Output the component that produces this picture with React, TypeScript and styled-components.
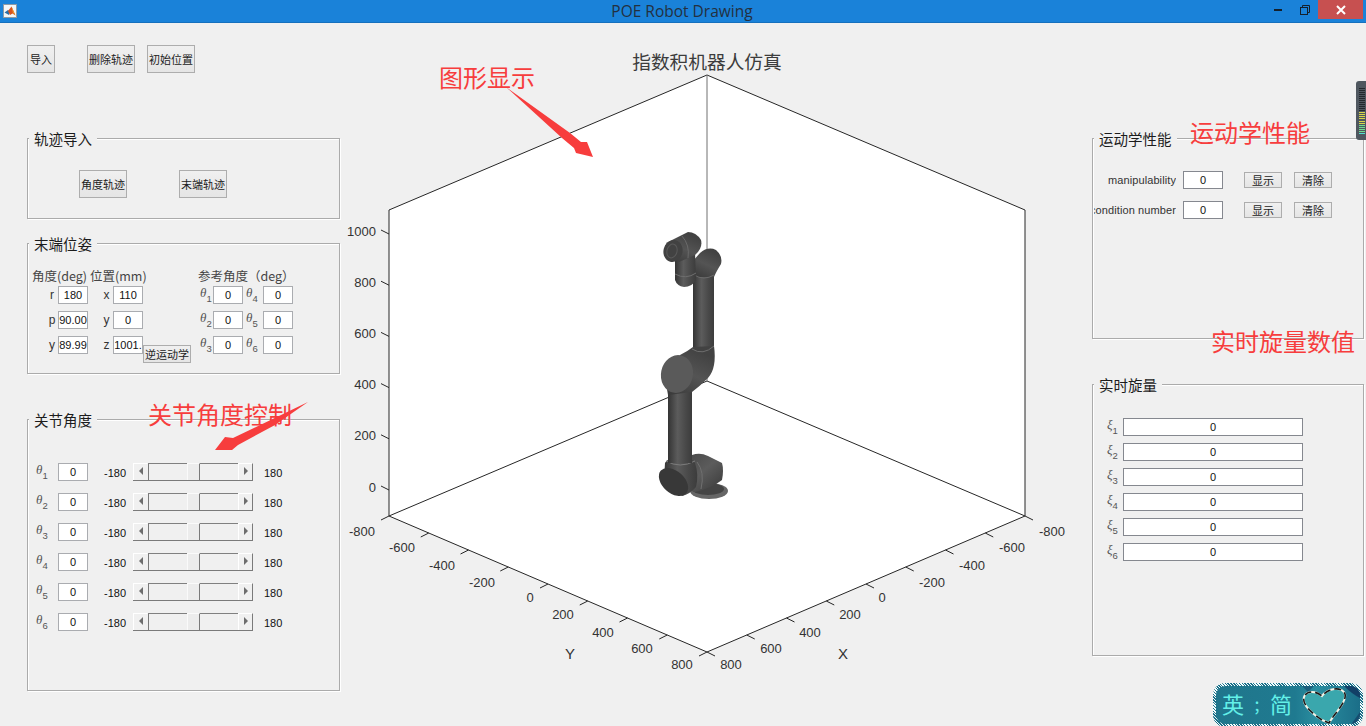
import React from "react";
import styled, { createGlobalStyle } from "styled-components";

const SANS = `"Liberation Sans", Arial, sans-serif`;
const CJK = `"Noto Sans CJK SC", "Liberation Sans", sans-serif`;

const Global = createGlobalStyle`
  html, body { margin: 0; padding: 0; background: #f0f0f0; overflow: hidden; }
  * { box-sizing: border-box; }
`;

const Root = styled.div`
  position: relative;
  width: 1366px;
  height: 726px;
  background: #f0f0f0;
  display: flex;
  flex-direction: column;
  overflow: hidden;
  font-family: ${SANS};
`;

const TitleBar = styled.header`
  height: 23px;
  flex: none;
  background: #1a82d9;
  border-bottom: 1px solid #1670bd;
  display: grid;
  grid-template-columns: 1fr auto 1fr;
  align-items: start;
`;
const TitleIconCell = styled.div`
  padding: 4px 0 0 3px;
  height: 22px;
`;
const WindowTitle = styled.div`
  font: 15.5px/23px "Open Sans", ${SANS};
  color: #23303f;
  white-space: nowrap;
  margin-left: -2px;
`;
const Controls = styled.div`
  display: flex;
  justify-content: flex-end;
  padding-right: 3px;
`;
const ControlBtn = styled.div<{ $w: number; $close?: boolean }>`
  width: ${(p) => p.$w}px;
  height: 19px;
  display: flex;
  align-items: center;
  justify-content: center;
  background: ${(p) => (p.$close ? "#c75050" : "transparent")};
`;

const Main = styled.main`
  flex: 1;
  display: grid;
  grid-template-columns: 340px 752px 274px;
  min-height: 0;
`;

const LeftColumn = styled.section`
  padding: 22px 0 0 27px;
  display: flex;
  flex-direction: column;
`;
const RightColumn = styled.section`
  padding: 115px 2px 0 0;
  display: flex;
  flex-direction: column;
  gap: 45px;
`;
const CenterColumn = styled.section`
  min-width: 0;
`;

const TopButtons = styled.div`
  display: flex;
  height: 28px;
  margin-bottom: 65px;
`;

const PushButton = styled.div<{ $w?: number; $h?: number; $ml?: number }>`
  width: ${(p) => p.$w ?? 48}px;
  height: ${(p) => p.$h ?? 28}px;
  margin-left: ${(p) => p.$ml ?? 0}px;
  flex: none;
  border: 1px solid #adadad;
  background: linear-gradient(#f0f0f0, #e5e5e5);
  color: #222;
  font: 11px/1 ${CJK};
  display: flex;
  align-items: center;
  justify-content: center;
  white-space: nowrap;
  overflow: hidden;
`;

const Panel = styled.div<{ $h: number; $mb?: number }>`
  position: relative;
  height: ${(p) => p.$h}px;
  margin-bottom: ${(p) => p.$mb ?? 0}px;
  flex: none;
  border: 1px solid #ababab;
  box-shadow: inset 1px 1px 0 #fff, 1px 1px 0 #fff;
`;
const Legend = styled.div`
  position: absolute;
  top: -8px;
  left: 1px;
  height: 16px;
  padding: 0 5px;
  background: #f0f0f0;
  color: #1c1c1c;
  font: 14.5px/16px ${CJK};
  white-space: nowrap;
`;

const TrackImport = styled.div`
  display: flex;
  padding: 31px 0 0 51px;
  gap: 52px;
`;

const PoseBody = styled.div`
  padding: 23px 0 0 4px;
`;
const PoseHeader = styled.div`
  height: 19px;
  display: flex;
  align-items: flex-start;
  color: #444;
  font: 12.5px/18px ${CJK};
  white-space: nowrap;
`;
const HeadCell = styled.span<{ $w: number }>`
  width: ${(p) => p.$w}px;
  flex: none;
`;
const PoseGrid = styled.div`
  display: grid;
  grid-template-columns: 26px 30px 25px 30px 1px 56px 13px 30px 20px 30px;
  grid-auto-rows: 18px;
  row-gap: 7px;
`;
const AxisLabel = styled.span`
  color: #333;
  font-size: 12px;
  line-height: 18px;
  text-align: center;
  padding-left: 14px;
`;
const AxisLabelX = styled(AxisLabel)`
  padding-left: 12px;
`;
const ValueBox = styled.div<{ $w?: number; $dark?: boolean }>`
  width: ${(p) => (p.$w ? `${p.$w}px` : "100%")};
  height: 18px;
  flex: none;
  background: #fff;
  border: 1px solid ${(p) => (p.$dark ? "#85888f" : "#aaacb0")};
  color: #111;
  font-size: 11px;
  line-height: 16px;
  text-align: center;
  white-space: nowrap;
  overflow: hidden;
`;
const IKButton = styled(PushButton)`
  margin-top: 9px;
  margin-bottom: -9px;
  height: 18px;
  width: 48px;
  position: relative;
`;
const Greek = styled.span<{ $pl?: number }>`
  display: flex;
  align-items: flex-start;
  padding-left: ${(p) => p.$pl ?? 0}px;
  color: #555;
  height: 18px;
`;
const GreekMain = styled.i`
  font: italic 13px/13px "Liberation Serif", "DejaVu Serif", serif;
`;
const GreekSub = styled.span`
  font: 9.5px/10px ${SANS};
  margin: 8px 0 0 0;
`;

const SliderList = styled.div`
  padding: 43px 0 0 8px;
  display: flex;
  flex-direction: column;
  gap: 12px;
`;
const SliderRow = styled.div`
  display: flex;
  align-items: center;
  height: 18px;
`;
const LabelCell = styled.div`
  width: 22px;
  flex: none;
  height: 18px;
`;
const RangeText = styled.span<{ $w: number; $ml: number }>`
  width: ${(p) => p.$w}px;
  margin-left: ${(p) => p.$ml}px;
  flex: none;
  color: #111;
  font-size: 11px;
  line-height: 18px;
  padding-top: 1px;
`;
const Slider = styled.div`
  width: 120px;
  height: 18px;
  flex: none;
  display: flex;
  border-bottom: 1px solid #7a7a7a;
`;
const SliderArrow = styled.div<{ $right?: boolean }>`
  width: 15px;
  flex: none;
  display: flex;
  align-items: center;
  justify-content: center;
  padding-bottom: 2px;
  background: #f0f0f0;
  border-top: 1px solid #fff;
  border-left: 1px solid #fff;
  border-right: 1px solid ${(p) => (p.$right ? "#7a7a7a" : "transparent")};
  &::before {
    content: "";
    border-style: solid;
    border-width: 4px 0 4px 4px;
    border-color: transparent transparent transparent #6d6d6d;
    transform: ${(p) => (p.$right ? "none" : "scaleX(-1)")};
  }
`;
const SliderTrack = styled.div`
  flex: 1;
  display: flex;
  justify-content: center;
  border-top: 1px solid #808080;
  border-left: 1px solid #7a7a7a;
`;
const SliderThumb = styled.div`
  width: 13px;
  margin-top: -1px;
  margin-left: -1px;
  background: #ececec;
  border-top: 1px solid #fafafa;
  border-left: 1px solid #fafafa;
  border-right: 1px solid #7a7a7a;
`;

const KinematicsBody = styled.div`
  padding: 32px 0 0 1px;
  display: flex;
  flex-direction: column;
  gap: 12px;
`;
const KinRow = styled.div`
  display: flex;
  align-items: center;
  height: 18px;
`;
const KinLabel = styled.div`
  width: 82px;
  flex: none;
  display: flex;
  justify-content: flex-end;
  overflow: hidden;
  color: #333;
  font-size: 11px;
  letter-spacing: 0.1px;
  line-height: 18px;
  white-space: nowrap;
  margin-right: 7px;
`;

const TwistList = styled.div`
  padding: 33px 0 0 14px;
  display: flex;
  flex-direction: column;
  gap: 7px;
`;
const TwistRow = styled.div`
  display: flex;
  height: 18px;
`;
const TwistLabel = styled.div`
  width: 16px;
  flex: none;
`;

const PlotSvg = styled.svg`
  display: block;
  width: 752px;
  height: 703px;
`;
const PlotTitle = styled.text`
  font: 18.7px ${CJK};
  fill: #3c3c3c;
  text-anchor: middle;
  dominant-baseline: central;
`;
const TickText = styled.text<{ $anchor?: string }>`
  font: 13px ${SANS};
  fill: #333;
  text-anchor: ${(p) => p.$anchor ?? "middle"};
  dominant-baseline: central;
`;
const AxisName = styled.text`
  font: 15px ${SANS};
  fill: #333;
  text-anchor: middle;
  dominant-baseline: central;
`;

const Annotation = styled.span<{ $x: number; $y: number }>`
  position: absolute;
  left: ${(p) => p.$x}px;
  top: ${(p) => p.$y}px;
  color: #f73d3d;
  font: 24px/30px ${CJK};
  white-space: nowrap;
`;
const ArrowLayer = styled.svg`
  position: absolute;
  inset: 0;
  width: 1366px;
  height: 726px;
  pointer-events: none;
`;

const MeterWidget = styled.div`
  position: absolute;
  right: 0;
  top: 81px;
  width: 10px;
  height: 59px;
  padding: 7px 1px 6px 3px;
  background: #4f575f;
  border-radius: 3px 0 0 3px;
  display: flex;
  flex-direction: column;
  justify-content: space-between;
`;
const MeterBar = styled.div<{ $c: string }>`
  height: 1px;
  flex: none;
  background: ${(p) => p.$c};
`;

const ImeBadge = styled.div`
  position: absolute;
  left: 1213px;
  top: 683px;
  width: 150px;
  height: 44px;
  padding: 3px;
  border-radius: 12px;
  background: repeating-linear-gradient(45deg, #f4ffff 0 1px, #1c6f88 1px 2px);
`;
const ImeInner = styled.div`
  position: relative;
  width: 100%;
  height: 100%;
  border-radius: 9px;
  background: linear-gradient(90deg, #20768c, #1f7a90 55%, #2a8ea0 70%, #1b6e88);
  display: flex;
  align-items: flex-start;
  padding: 1px 0 0 6px;
  color: #63f0e8;
  font: 22px/32px ${CJK};
  overflow: hidden;
`;
const ImeDot = styled.span`
  width: 26px;
  text-align: center;
  flex: none;
  font-size: 18px;
`;
const ImeHeart = styled.svg`
  position: absolute;
  right: 0;
  top: 0;
  width: 62px;
  height: 40px;
`;

const Theta = ({ n, pl, sym = "θ" }: { n: number; pl?: number; sym?: string }) => (
  <Greek $pl={pl}>
    <GreekMain>{sym}</GreekMain>
    <GreekSub>{n}</GreekSub>
  </Greek>
);

const RangeSlider = () => (
  <Slider>
    <SliderArrow />
    <SliderTrack>
      <SliderThumb />
    </SliderTrack>
    <SliderArrow $right />
  </Slider>
);

const yLabels: [string, number, number][] = [
  ["-800", 362, 531], ["-600", 402, 547], ["-400", 442, 565], ["-200", 482, 582], ["0", 530, 597],
  ["200", 563, 614], ["400", 603, 632], ["600", 642, 648], ["800", 682, 664],
];
const xLabels: [string, number, number][] = [
  ["-800", 1052, 531], ["-600", 1012, 547], ["-400", 972, 565], ["-200", 932, 582], ["0", 882, 597],
  ["200", 850, 614], ["400", 810, 632], ["600", 771, 648], ["800", 731, 664],
];
const zLabels = ["1000", "800", "600", "400", "200", "0"];

const Robot = () => (
  <g>
    <defs>
      <linearGradient id="armV" x1="0" x2="1" y1="0" y2="0">
        <stop offset="0" stopColor="#343434" />
        <stop offset="0.4" stopColor="#5c5c5c" />
        <stop offset="0.75" stopColor="#484848" />
        <stop offset="1" stopColor="#3c3c3c" />
      </linearGradient>
      <linearGradient id="armD" x1="0" x2="0.5" y1="1" y2="0">
        <stop offset="0" stopColor="#383838" />
        <stop offset="0.55" stopColor="#545454" />
        <stop offset="1" stopColor="#424242" />
      </linearGradient>
      <linearGradient id="baseBody" x1="0" x2="1" y1="0" y2="1">
        <stop offset="0" stopColor="#444" />
        <stop offset="0.5" stopColor="#5c5c5c" />
        <stop offset="1" stopColor="#383838" />
      </linearGradient>
    </defs>
    {/* flange and rear housing */}
    <ellipse cx="709" cy="491" rx="19" ry="8" fill="#666" />
    <ellipse cx="708" cy="489" rx="16" ry="6" fill="#444" />
    <path d="M692 455 Q700 452 708 456 L722 463 Q724 470 722 480 Q712 488 695 492 L682 488 L680 465 Z" fill="url(#baseBody)" />
    <path d="M697 462 Q705 472 701 489" stroke="#707070" strokeWidth="1" fill="none" />
    {/* lower shoulder */}
    <path d="M665 463 Q668 457 680 458 Q692 457 695 463 Q699 475 696 487 Q690 494 682 496 L664 480 Z" fill="url(#armV)" />
    <path d="M666 461 Q680 469 695 461" stroke="#7c7c7c" strokeWidth="1" fill="none" />
    <ellipse cx="673.5" cy="482" rx="17" ry="11" transform="rotate(42 673.5 482)" fill="#383838" />
    {/* lower arm */}
    <rect x="668" y="392" width="24" height="71" fill="url(#armV)" />
    {/* upper arm */}
    <rect x="693" y="274" width="21" height="76" fill="url(#armV)" />
    <path d="M680 355 Q688 351 693 347 L714 346 Q717 368 708 378 Q700 386 692 392 L668 395 L664 372 Z" fill="url(#armD)" />
    <path d="M692 349 Q703 356 714 346" stroke="#6e6e6e" strokeWidth="1" fill="none" />
    <ellipse cx="677" cy="374" rx="16" ry="19" transform="rotate(12 677 374)" fill="#5a5a5a" />
    {/* upper shoulder */}
    <path d="M700 253 Q708 246 716 250 Q723 256 721 264 Q716 272 714 277 L693 277 L692 262 Z" fill="url(#armD)" />
    <path d="M694 275 Q704 281 714 275" stroke="#6a6a6a" strokeWidth="1" fill="none" />
    {/* wrist */}
    <path d="M675 258 L695 252 L696 280 Q692 287 684 287 Q677 286 675 280 Z" fill="url(#armV)" />
    <path d="M675 274 Q686 280 696 273" stroke="#6e6e6e" strokeWidth="1" fill="none" />
    <path d="M666 243 L688 232 Q696 232 701 240 Q703 248 695 255 L679 262 Z" fill="url(#armD)" />
    <path d="M682 236 Q690 245 688 258" stroke="#6a6a6a" strokeWidth="1" fill="none" />
    <ellipse cx="673" cy="251" rx="9.5" ry="11" transform="rotate(15 673 251)" fill="#424242" />
    <ellipse cx="672" cy="251" rx="5" ry="7" transform="rotate(15 672 251)" fill="none" stroke="#5a5a5a" strokeWidth="1" />
  </g>
);

const Plot = () => (
  <PlotSvg viewBox="340 23 752 703" aria-label="3D plot">
    <PlotTitle x="707" y="60">指数积机器人仿真</PlotTitle>
    <polygon points="389,210 707,75 1025,210 1025,516 707,652 389,516" fill="#fff" />
    <g stroke="#262626" strokeWidth="1" fill="none">
      <polyline points="389,516 389,210 707,75 1025,210 1025,516" />
      <polyline points="389,516 707,652 1025,516" />
      <polyline points="389,516 707,381 1025,516" />
      <line x1="707" y1="75" x2="707" y2="381" stroke="#707070" />
      {Array.from({ length: 9 }, (_, i) => (
        <line key={`y${i}`} x1={389 + i * 39.75} y1={516 + i * 17} x2={381 + i * 39.75} y2={520 + i * 17} />
      ))}
      {Array.from({ length: 9 }, (_, i) => (
        <line key={`x${i}`} x1={1025 - i * 39.75} y1={516 + i * 17} x2={1033 - i * 39.75} y2={520 + i * 17} />
      ))}
      {zLabels.map((_, i) => (
        <line key={`z${i}`} x1="389" y1={234 + i * 51.2} x2="381" y2={230 + i * 51.2} />
      ))}
    </g>
    {yLabels.map(([t, x, y]) => <TickText key={`ly${t}`} x={x} y={y}>{t}</TickText>)}
    {xLabels.map(([t, x, y]) => <TickText key={`lx${t}`} x={x} y={y}>{t}</TickText>)}
    {zLabels.map((t, i) => (
      <TickText key={`lz${t}`} $anchor="end" x="376" y={231 + i * 51.2}>{t}</TickText>
    ))}
    <AxisName x="570" y="653">Y</AxisName>
    <AxisName x="843" y="653">X</AxisName>
    <Robot />
  </PlotSvg>
);

const poseRows = [
  { a: "r", av: "180", b: "x", bv: "110", t1: 1, t2: 4 },
  { a: "p", av: "90.00", b: "y", bv: "0", t1: 2, t2: 5 },
  { a: "y", av: "89.99", b: "z", bv: "1001.", t1: 3, t2: 6 },
];
const joints = [1, 2, 3, 4, 5, 6];

const meterColors = [
  ...Array(12).fill("#24292e"),
  ...Array(6).fill("#d8d648"),
  ...Array(4).fill("#72dc8e"),
  "#4fe0cf",
];

export default function App() {
  return (
    <Root>
      <Global />
      <TitleBar>
        <TitleIconCell>
          <svg width="14" height="14" viewBox="0 0 14 14" aria-label="MATLAB">
            <rect x="0.5" y="0.5" width="13" height="13" fill="#f4f6f8" stroke="#8f9aa5" />
            <path d="M1.5 8.5 L5 6 L7 7.5 L6 11 Z" fill="#2b6fa8" />
            <path d="M5 7 L8.5 2.5 L12.5 11.5 L9.5 9.5 L7 11 Z" fill="#d9531e" />
            <path d="M8.5 2.5 L10 9 L12.5 11.5 Z" fill="#f09a2a" />
          </svg>
        </TitleIconCell>
        <WindowTitle>POE Robot Drawing</WindowTitle>
        <Controls>
          <ControlBtn $w={26}>
            <svg width="8" height="3" viewBox="0 0 8 3"><rect y="1" width="8" height="2" fill="#14202c" /></svg>
          </ControlBtn>
          <ControlBtn $w={27}>
            <svg width="10" height="10" viewBox="0 0 10 10" fill="none" stroke="#14202c">
              <rect x="0.5" y="2.5" width="7" height="7" strokeWidth="1" />
              <path d="M2.5 2.5 V0.5 H9.5 V7.5 H7.5" strokeWidth="1" />
            </svg>
          </ControlBtn>
          <ControlBtn $w={45} $close>
            <svg width="10" height="10" viewBox="0 0 10 10" stroke="#fff" strokeWidth="2">
              <path d="M1 1 L9 9 M9 1 L1 9" />
            </svg>
          </ControlBtn>
        </Controls>
      </TitleBar>

      <Main>
        <LeftColumn>
          <TopButtons>
            <PushButton $w={28}>导入</PushButton>
            <PushButton $ml={32}>删除轨迹</PushButton>
            <PushButton $ml={12}>初始位置</PushButton>
          </TopButtons>

          <Panel $h={81} $mb={24}>
            <Legend>轨迹导入</Legend>
            <TrackImport>
              <PushButton>角度轨迹</PushButton>
              <PushButton>末端轨迹</PushButton>
            </TrackImport>
          </Panel>

          <Panel $h={131} $mb={45}>
            <Legend>末端位姿</Legend>
            <PoseBody>
              <PoseHeader>
                <HeadCell $w={58}>角度(deg)</HeadCell>
                <HeadCell $w={108}>位置(mm)</HeadCell>
                <HeadCell $w={100}>参考角度（deg）</HeadCell>
              </PoseHeader>
              <PoseGrid>
                {poseRows.map((r, i) => (
                  <React.Fragment key={r.t1}>
                    <AxisLabel>{r.a}</AxisLabel>
                    <ValueBox>{r.av}</ValueBox>
                    <AxisLabelX>{r.b}</AxisLabelX>
                    <ValueBox>{r.bv}</ValueBox>
                    <span>{i === 2 ? <IKButton>逆运动学</IKButton> : null}</span>
                    <span />
                    <Theta n={r.t1} pl={0} />
                    <ValueBox>0</ValueBox>
                    <Theta n={r.t2} pl={3} />
                    <ValueBox>0</ValueBox>
                  </React.Fragment>
                ))}
              </PoseGrid>
            </PoseBody>
          </Panel>

          <Panel $h={272}>
            <Legend>关节角度</Legend>
            <SliderList>
              {joints.map((n) => (
                <SliderRow key={n}>
                  <LabelCell><Theta n={n} /></LabelCell>
                  <ValueBox $w={30}>0</ValueBox>
                  <RangeText $w={29} $ml={16}>-180</RangeText>
                  <RangeSlider />
                  <RangeText $w={24} $ml={11}>180</RangeText>
                </SliderRow>
              ))}
            </SliderList>
          </Panel>
        </LeftColumn>

        <CenterColumn>
          <Plot />
        </CenterColumn>

        <RightColumn>
          <Panel $h={201}>
            <Legend>运动学性能</Legend>
            <KinematicsBody>
              {["manipulability", "condition number"].map((t) => (
                <KinRow key={t}>
                  <KinLabel>{t}</KinLabel>
                  <ValueBox $w={40} $dark>0</ValueBox>
                  <PushButton $w={38} $h={16} $ml={21}>显示</PushButton>
                  <PushButton $w={38} $h={16} $ml={12}>清除</PushButton>
                </KinRow>
              ))}
            </KinematicsBody>
          </Panel>
          <Panel $h={272}>
            <Legend>实时旋量</Legend>
            <TwistList>
              {joints.map((n) => (
                <TwistRow key={n}>
                  <TwistLabel><Theta n={n} sym="ξ" /></TwistLabel>
                  <ValueBox $w={180} $dark>0</ValueBox>
                </TwistRow>
              ))}
            </TwistList>
          </Panel>
        </RightColumn>
      </Main>

      <Annotation $x={439} $y={62}>图形显示</Annotation>
      <Annotation $x={148} $y={399}>关节角度控制</Annotation>
      <Annotation $x={1190} $y={117}>运动学性能</Annotation>
      <Annotation $x={1211} $y={326}>实时旋量数值</Annotation>
      <ArrowLayer viewBox="0 0 1366 726" aria-hidden="true">
        <polygon points="506,87 570,133 581,142 587,142 593,157 576,153 574,148 562,138" fill="#f73d3d" />
        <polygon points="308,402 233,438 225,437 215,450 232,450 238,445 275,425" fill="#f73d3d" />
      </ArrowLayer>

      <MeterWidget>
        {meterColors.map((c, i) => <MeterBar key={i} $c={c} />)}
      </MeterWidget>

      <ImeBadge>
        <ImeInner>
          英<ImeDot>;</ImeDot>简
          <ImeHeart viewBox="0 0 62 40" aria-label="heart island">
            <path d="M46 0 H62 V12 Q54 8 46 0 Z" fill="#123f66" />
            <path d="M4 0 H16 L10 6 Z" fill="#1b5f7c" />
            <path d="M52 40 H62 V26 Z" fill="#164d70" />
            <path d="M24 34 C12 26 4 18 6 11 C8 5 17 4 24 10 C30 2 44 0 47 8 C49 16 36 28 31 37 Z" fill="#3aa7ad" stroke="#f4f4e8" strokeWidth="2" />
            <path d="M24 34 C12 26 4 18 6 11 C8 5 17 4 24 10 C30 2 44 0 47 8 C49 16 36 28 31 37 Z" fill="none" stroke="#1a1a1a" strokeWidth="1.6" strokeDasharray="7 4" />
          </ImeHeart>
        </ImeInner>
      </ImeBadge>
    </Root>
  );
}
